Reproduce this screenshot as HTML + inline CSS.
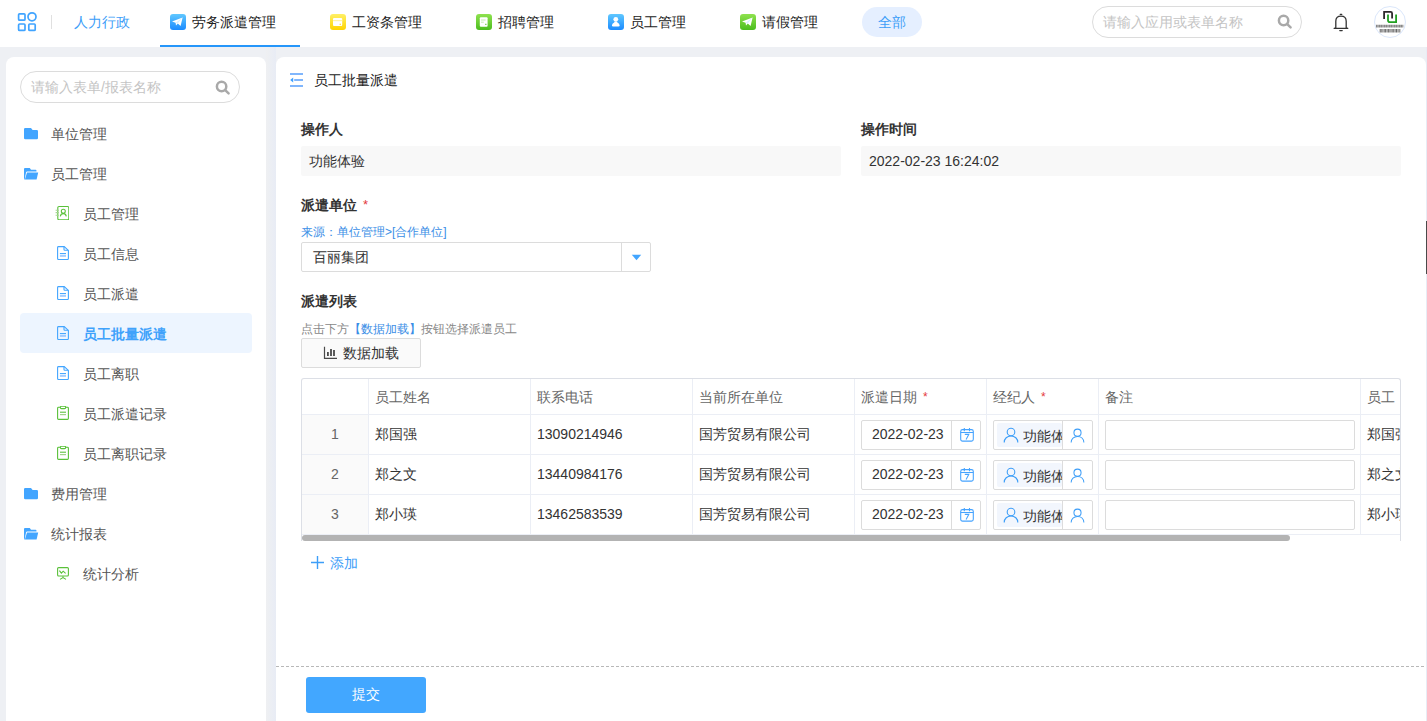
<!DOCTYPE html>
<html><head><meta charset="utf-8">
<style>
*{box-sizing:border-box;margin:0;padding:0}
html,body{width:1427px;height:721px;overflow:hidden}
body{font-family:"Liberation Sans",sans-serif;font-size:14px;color:#333;background:#eef0f4;position:relative}
.a{position:absolute}
.t{position:absolute;white-space:nowrap;line-height:20px}
svg{display:block}
#hdr{position:absolute;left:0;top:0;width:1427px;height:47px;background:#fff}
.tabic{position:absolute;top:14px;width:16px;height:16px;border-radius:3px}
#side{position:absolute;left:6px;top:57px;width:260px;height:680px;background:#fff;border-radius:8px}
#main{position:absolute;left:276px;top:57px;width:1150px;height:680px;background:#fff;border-radius:8px}
.m1{color:#555}
.lbl{font-weight:bold;color:#333}
.ro{position:absolute;height:30px;background:#f8f8f8;border-radius:2px}
.tb{position:absolute;left:301px;top:378px;width:1100px;height:163px;border:1px solid #dcdfe6;border-bottom:0;border-radius:3px 3px 0 0;overflow:hidden}
.hl{position:absolute;height:1px;background:#ebeef5}
.vl{position:absolute;width:1px;background:#ebeef5}
.th{color:#666}
.req{color:#e4393c;font-size:12px;margin-left:2px;position:relative;top:-1px}
.inp{position:absolute;border:1px solid #dcdcdc;border-radius:2px;background:#fff}
</style></head><body>

<svg width="0" height="0" style="position:absolute"><defs>
<g id="ical"><g fill="none" stroke="#45a3ff" stroke-width="1.1"><rect x="1.7" y="2.6" width="12.6" height="11.5" rx="1.8"/><path d="M1.7 5.5h12.6M5.3 1v3.2M10.5 1v3.2"/><path d="M5.8 7.4h4l-2.7 5"/></g></g>
<g id="ifold"><path fill="#42a5ff" d="M0 1.2Q0 0 1.2 0H7L8.6 2H12.8Q14 2 14 3.2V10Q14 11.2 12.8 11.2H1.2Q0 11.2 0 10Z"/></g>
<g id="ifoldo"><path fill="#42a5ff" d="M0 1Q0 0 1 0H5.8L7 1.8H11.6Q12.5 1.8 12.5 2.7V3.4H3.2Q2.3 3.4 2.1 4.3L0.6 11.4H0Z"/><path fill="#42a5ff" d="M3 4.4H14.2L12.6 11.6H0.9Z"/></g>
<g id="idoc"><g fill="none" stroke="#42a5ff" stroke-width="1.1"><path d="M1.5 0.6H7.2L11.4 4.4V12.6Q11.4 13.5 10.5 13.5H1.5Q0.6 13.5 0.6 12.6V1.5Q0.6 0.6 1.5 0.6Z"/><path d="M7 0.8V3.5Q7 4.3 7.8 4.3H11.2"/><path d="M2.9 7.6H9"/></g><path d="M2.9 9.3H9V10.6H2.9Z" fill="#7fb8ff"/></g>
<g id="iclip"><g fill="none" stroke="#5ac13a" stroke-width="1.1"><path d="M3.2 1.3H1.5Q0.6 1.3 0.6 2.2V12.6Q0.6 13.4 1.5 13.4H10.5Q11.4 13.4 11.4 12.6V2.2Q11.4 1.3 10.5 1.3H8.8"/><rect x="3.3" y="0.2" width="5.4" height="2.4" rx="1.2"/><path d="M3 6.2H9"/></g><path d="M3 8H9V9.2H3Z" fill="#9fd389"/></g>
<g id="icontact"><g fill="none" stroke="#5ac13a" stroke-width="1.1"><rect x="4.8" y="1.5" width="11" height="13.2" rx="1.2"/><circle cx="10.3" cy="6.3" r="2"/><path d="M7.3 11.4Q7.8 8.6 10.3 8.6T13.3 11.4"/><path d="M2.6 5.2H6M2.6 7.6H6M2.6 10.2H6" stroke="#a6d494"/></g></g>
<g id="ipres"><g fill="none" stroke="#5ac13a" stroke-width="1.1"><rect x="0.6" y="0.6" width="10.8" height="8.4" rx="1"/><path d="M2.4 3.6L4.4 6.2L6.2 4.2L8.6 6.4"/><path d="M6 9.2V10.6M3 12.4L6 10.6L9 12.4"/></g></g>
<g id="iplane"><path fill="#fff" d="M2 7.6L12.6 3.6L10.6 12L7.8 9.4L6 11.4L5.6 8.8Z"/><path fill="#d8efff" d="M5.6 8.8L12.6 3.6L7.8 9.4Z"/></g>
<g id="iperson"><g fill="none" stroke="#3d9ef8" stroke-width="1.1"><circle cx="8" cy="5" r="3.8"/><path d="M1.2 15.5c0-4 3-6.5 6.8-6.5s6.8 2.5 6.8 6.5"/></g></g>
</defs></svg>
<!-- HEADER -->
<div id="hdr">
  <svg class="a" style="left:12px;top:8px" width="30" height="30" viewBox="0 0 30 30"><g fill="none" stroke="#40a4ff" stroke-width="1.7"><rect x="6.6" y="5.8" width="6.4" height="6.4" rx="1"/><circle cx="20" cy="8.8" r="4"/><rect x="6.6" y="16" width="6.4" height="6.4" rx="1"/><rect x="16.8" y="16" width="6.4" height="6.4" rx="1"/></g></svg>
  <div class="a" style="left:51px;top:15px;width:1px;height:14px;background:#e0e0e0"></div>
  <div class="t" style="left:74px;top:12px;color:#3d9ef8">人力行政</div>

  <div class="tabic" style="left:170px;background:linear-gradient(#60c8ff,#1b8bff)"><svg width="16" height="16" viewBox="0 0 16 16"><use href="#iplane"/></svg></div>
  <div class="t" style="left:192px;top:12px;color:#222">劳务派遣管理</div>
  <div class="a" style="left:160px;top:45px;width:140px;height:2px;background:#2596fa"></div>

  <div class="tabic" style="left:330px;background:linear-gradient(#fff066,#ffd400)"><svg width="16" height="16" viewBox="0 0 16 16"><rect x="3" y="4" width="9.2" height="8" rx="1" fill="#fff"/><rect x="3" y="6" width="9.2" height="1.2" fill="#fff3a6"/><circle cx="10.3" cy="10.4" r="0.8" fill="#ffe14d"/></svg></div>
  <div class="t" style="left:352px;top:12px;color:#222">工资条管理</div>

  <div class="tabic" style="left:476px;background:linear-gradient(#8fe24f,#4bbd1d)"><svg width="16" height="16" viewBox="0 0 16 16"><rect x="3.8" y="3.2" width="7.8" height="9.6" rx="1" fill="#fff"/><path d="M5 6H9.6M5 8.2H7.8" stroke="#c4ecb0" stroke-width="1"/><path d="M9 10.4H10.6" stroke="#8bd36a" stroke-width="1.2"/></svg></div>
  <div class="t" style="left:498px;top:12px;color:#222">招聘管理</div>

  <div class="tabic" style="left:608px;background:linear-gradient(#60c8ff,#1b8bff)"><svg width="16" height="16" viewBox="0 0 16 16"><circle cx="7.8" cy="5.3" r="2.4" fill="#fff"/><path d="M6.6 7.4H9L9.4 8.4Q11.6 9.4 11.7 11.4Q11.7 12.4 10.4 12.4H5.2Q3.9 12.4 3.9 11.4Q4 9.4 6.2 8.4Z" fill="#fff"/></svg></div>
  <div class="t" style="left:630px;top:12px;color:#222">员工管理</div>

  <div class="tabic" style="left:740px;background:linear-gradient(#8fe24f,#4bbd1d)"><svg width="16" height="16" viewBox="0 0 16 16"><use href="#iplane"/></svg></div>
  <div class="t" style="left:762px;top:12px;color:#222">请假管理</div>

  <div class="a" style="left:862px;top:7px;width:60px;height:30px;border-radius:15px;background:#e5efff"></div>
  <div class="t" style="left:878px;top:12px;color:#3d9ef8">全部</div>

  <div class="a" style="left:1092px;top:6px;width:210px;height:32px;border:1px solid #dcdcdc;border-radius:16px"></div>
  <div class="t" style="left:1103px;top:12px;color:#c4c4c4">请输入应用或表单名称</div>

  <div class="a" style="left:1374px;top:6px;width:32px;height:32px;border:1px solid #dbe7fb;border-radius:50%"></div>
<svg class="a" style="left:1276px;top:13px" width="17" height="17" viewBox="0 0 17 17"><g fill="none" stroke="#a9a9a9" stroke-width="2.5"><circle cx="7.6" cy="7.5" r="4.7"/><path d="M11.2 11.1L14.6 14.3" stroke-linecap="round"/></g></svg>
  <svg class="a" style="left:1332px;top:12px" width="18" height="21" viewBox="0 0 18 21"><g fill="none" stroke="#333" stroke-width="1.3"><path d="M3.8 16V9.2Q3.8 4.1 9 4.1T14.2 9.2V16L15.8 16.4H2.2Z" stroke-linejoin="round"/><path d="M8.2 2.3H9.8M7.8 18.6H10.2" stroke-linecap="round"/></g></svg>
  <svg class="a" style="left:1375px;top:10px" width="30" height="24" viewBox="0 0 30 24"><path d="M9.1 9V1.9H15.6Q17.1 1.9 17.1 3.4V8.6" fill="none" stroke="#2f2a2c" stroke-width="1.8"/><path d="M13 4.5V10.2Q13 12.1 14.9 12.1H21.1V4.5" fill="none" stroke="#22a022" stroke-width="1.8"/><path d="M1.2 16.1H28.5" stroke="#6a6a6a" stroke-width="2.8" stroke-dasharray="1.1 0.4 0.6 0.4"/><path d="M4.7 20.8H25.5" stroke="#6a6a6a" stroke-width="3.4" stroke-dasharray="1.1 0.5 0.7 0.4"/></svg>
</div>

<!-- SIDEBAR -->
<div class="a" style="left:266px;top:47px;width:10px;height:674px;background:linear-gradient(90deg,#eff0f2,#e8ecf5)"></div>
<div class="a" style="left:1426px;top:47px;width:1px;height:674px;background:#e8ecf5"></div>
<div id="side"></div>
<div class="a" style="left:20px;top:71px;width:220px;height:32px;border:1px solid #dcdcdc;border-radius:16px"></div>
<div class="t" style="left:31px;top:77px;color:#c4c4c4">请输入表单/报表名称</div>

<div class="a" style="left:20px;top:313px;width:232px;height:40px;border-radius:4px;background:#edf5ff"></div>
<div class="t m1" style="left:51px;top:124px">单位管理</div>
<div class="t m1" style="left:51px;top:164px">员工管理</div>
<div class="t m1" style="left:83px;top:204px">员工管理</div>
<div class="t m1" style="left:83px;top:244px">员工信息</div>
<div class="t m1" style="left:83px;top:284px">员工派遣</div>
<div class="t" style="left:83px;top:324px;color:#3fa2fb;font-weight:bold">员工批量派遣</div>
<div class="t m1" style="left:83px;top:364px">员工离职</div>
<div class="t m1" style="left:83px;top:404px">员工派遣记录</div>
<div class="t m1" style="left:83px;top:444px">员工离职记录</div>
<div class="t m1" style="left:51px;top:484px">费用管理</div>
<div class="t m1" style="left:51px;top:524px">统计报表</div>
<div class="t m1" style="left:83px;top:564px">统计分析</div>


<svg class="a" style="left:214px;top:79px" width="17" height="17" viewBox="0 0 17 17"><g fill="none" stroke="#a9a9a9" stroke-width="2.5"><circle cx="7.6" cy="7.5" r="4.7"/><path d="M11.2 11.1L14.6 14.3" stroke-linecap="round"/></g></svg>
<svg class="a" style="left:24px;top:128px" width="14" height="12" viewBox="0 0 14 12"><use href="#ifold"/></svg>
<svg class="a" style="left:24px;top:168px" width="15" height="12" viewBox="0 0 15 12"><use href="#ifoldo"/></svg>
<svg class="a" style="left:53px;top:205px" width="16" height="15" viewBox="0 0 16 15"><use href="#icontact"/></svg>
<svg class="a" style="left:57px;top:246px" width="12" height="14" viewBox="0 0 12 14"><use href="#idoc"/></svg>
<svg class="a" style="left:57px;top:286px" width="12" height="14" viewBox="0 0 12 14"><use href="#idoc"/></svg>
<svg class="a" style="left:57px;top:326px" width="12" height="14" viewBox="0 0 12 14"><use href="#idoc"/></svg>
<svg class="a" style="left:57px;top:366px" width="12" height="14" viewBox="0 0 12 14"><use href="#idoc"/></svg>
<svg class="a" style="left:57px;top:406px" width="12" height="14" viewBox="0 0 12 14"><use href="#iclip"/></svg>
<svg class="a" style="left:57px;top:446px" width="12" height="14" viewBox="0 0 12 14"><use href="#iclip"/></svg>
<svg class="a" style="left:24px;top:488px" width="14" height="12" viewBox="0 0 14 12"><use href="#ifold"/></svg>
<svg class="a" style="left:24px;top:528px" width="15" height="12" viewBox="0 0 15 12"><use href="#ifoldo"/></svg>
<svg class="a" style="left:57px;top:567px" width="12" height="13" viewBox="0 0 12 13"><use href="#ipres"/></svg>

<!-- MAIN -->
<div id="main"></div>
<div class="t" style="left:314px;top:70px;color:#222">员工批量派遣</div>

<div class="t lbl" style="left:301px;top:119px">操作人</div>
<div class="ro" style="left:301px;top:146px;width:540px"></div>
<div class="t" style="left:309px;top:151px">功能体验</div>
<div class="t lbl" style="left:861px;top:119px">操作时间</div>
<div class="ro" style="left:861px;top:146px;width:540px"></div>
<div class="t" style="left:869px;top:151px">2022-02-23 16:24:02</div>

<div class="t lbl" style="left:301px;top:195px">派遣单位 <span class="req" style="font-weight:normal;font-size:13px">*</span></div>
<div class="t" style="left:301px;top:222px;font-size:12px;color:#3a8ee6">来源：单位管理&gt;[合作单位]</div>
<div class="inp" style="left:301px;top:242px;width:350px;height:30px"></div>
<div class="a" style="left:621px;top:243px;width:1px;height:28px;background:#dcdcdc"></div>
<div class="t" style="left:313px;top:247px">百丽集团</div>

<div class="t lbl" style="left:301px;top:291px">派遣列表</div>
<div class="t" style="left:301px;top:319px;font-size:12px;color:#888">点击下方<span style="color:#3a8ee6">【数据加载】</span>按钮选择派遣员工</div>
<div class="a" style="left:301px;top:338px;width:120px;height:30px;border:1px solid #dcdcdc;border-radius:2px;background:#fafafa"></div>
<div class="t" style="left:343px;top:343px">数据加载</div>

<div class="tb"><div class="a" style="left:-302px;top:-379px;width:1427px;height:721px">
<div class="a" style="left:302px;top:415px;width:66px;height:119px;background:#fafafa"></div>
<div class="hl" style="left:302px;top:414px;width:1100px"></div>
<div class="hl" style="left:302px;top:454px;width:1100px"></div>
<div class="hl" style="left:302px;top:494px;width:1100px"></div>
<div class="hl" style="left:302px;top:534px;width:1100px"></div>
<div class="vl" style="left:368px;top:379px;height:155px"></div>
<div class="vl" style="left:530px;top:379px;height:155px"></div>
<div class="vl" style="left:692px;top:379px;height:155px"></div>
<div class="vl" style="left:854px;top:379px;height:155px"></div>
<div class="vl" style="left:986px;top:379px;height:155px"></div>
<div class="vl" style="left:1098px;top:379px;height:155px"></div>
<div class="vl" style="left:1360px;top:379px;height:155px"></div>
<div class="t th" style="left:375px;top:387px">员工姓名</div>
<div class="t th" style="left:537px;top:387px">联系电话</div>
<div class="t th" style="left:699px;top:387px">当前所在单位</div>
<div class="t th" style="left:861px;top:387px">派遣日期 <span class="req">*</span></div>
<div class="t th" style="left:993px;top:387px">经纪人 <span class="req">*</span></div>
<div class="t th" style="left:1105px;top:387px">备注</div>
<div class="t th" style="left:1367px;top:387px">员工</div>
<div class="t th" style="left:331px;top:424px;width:8px;text-align:center">1</div>
<div class="t" style="left:375px;top:424px">郑国强</div>
<div class="t" style="left:537px;top:424px">13090214946</div>
<div class="t" style="left:699px;top:424px">国芳贸易有限公司</div>
<div class="inp" style="left:861px;top:420px;width:120px;height:30px"></div>
<div class="vl" style="left:951px;top:421px;height:28px;background:#dcdcdc"></div>
<div class="t" style="left:872px;top:424px">2022-02-23</div>
<svg class="a cal" style="left:959px;top:427px" width="16" height="15" viewBox="0 0 16 15"><use href="#ical"/></svg>
<div class="inp" style="left:993px;top:420px;width:100px;height:30px"></div>
<div class="a" style="left:997px;top:423px;width:65px;height:24px;background:#f2f6fd;border-radius:2px"></div>
<div class="vl" style="left:1062px;top:421px;height:28px;background:#dcdcdc"></div>
<svg class="a" style="left:1003px;top:427px" width="16" height="16" viewBox="0 0 16 16"><use href="#iperson"/></svg>
<div class="a" style="left:1023px;top:421px;width:39px;height:28px;overflow:hidden"><div class="t" style="left:0;top:5px">功能体验</div></div>
<svg class="a" style="left:1070px;top:428px" width="15" height="15" viewBox="0 0 16 16"><use href="#iperson"/></svg>
<div class="inp" style="left:1105px;top:420px;width:250px;height:30px"></div>
<div class="t" style="left:1367px;top:424px">郑国强</div>
<div class="t th" style="left:331px;top:464px;width:8px;text-align:center">2</div>
<div class="t" style="left:375px;top:464px">郑之文</div>
<div class="t" style="left:537px;top:464px">13440984176</div>
<div class="t" style="left:699px;top:464px">国芳贸易有限公司</div>
<div class="inp" style="left:861px;top:460px;width:120px;height:30px"></div>
<div class="vl" style="left:951px;top:461px;height:28px;background:#dcdcdc"></div>
<div class="t" style="left:872px;top:464px">2022-02-23</div>
<svg class="a cal" style="left:959px;top:467px" width="16" height="15" viewBox="0 0 16 15"><use href="#ical"/></svg>
<div class="inp" style="left:993px;top:460px;width:100px;height:30px"></div>
<div class="a" style="left:997px;top:463px;width:65px;height:24px;background:#f2f6fd;border-radius:2px"></div>
<div class="vl" style="left:1062px;top:461px;height:28px;background:#dcdcdc"></div>
<svg class="a" style="left:1003px;top:467px" width="16" height="16" viewBox="0 0 16 16"><use href="#iperson"/></svg>
<div class="a" style="left:1023px;top:461px;width:39px;height:28px;overflow:hidden"><div class="t" style="left:0;top:5px">功能体验</div></div>
<svg class="a" style="left:1070px;top:468px" width="15" height="15" viewBox="0 0 16 16"><use href="#iperson"/></svg>
<div class="inp" style="left:1105px;top:460px;width:250px;height:30px"></div>
<div class="t" style="left:1367px;top:464px">郑之文</div>
<div class="t th" style="left:331px;top:504px;width:8px;text-align:center">3</div>
<div class="t" style="left:375px;top:504px">郑小瑛</div>
<div class="t" style="left:537px;top:504px">13462583539</div>
<div class="t" style="left:699px;top:504px">国芳贸易有限公司</div>
<div class="inp" style="left:861px;top:500px;width:120px;height:30px"></div>
<div class="vl" style="left:951px;top:501px;height:28px;background:#dcdcdc"></div>
<div class="t" style="left:872px;top:504px">2022-02-23</div>
<svg class="a cal" style="left:959px;top:507px" width="16" height="15" viewBox="0 0 16 15"><use href="#ical"/></svg>
<div class="inp" style="left:993px;top:500px;width:100px;height:30px"></div>
<div class="a" style="left:997px;top:503px;width:65px;height:24px;background:#f2f6fd;border-radius:2px"></div>
<div class="vl" style="left:1062px;top:501px;height:28px;background:#dcdcdc"></div>
<svg class="a" style="left:1003px;top:507px" width="16" height="16" viewBox="0 0 16 16"><use href="#iperson"/></svg>
<div class="a" style="left:1023px;top:501px;width:39px;height:28px;overflow:hidden"><div class="t" style="left:0;top:5px">功能体验</div></div>
<svg class="a" style="left:1070px;top:508px" width="15" height="15" viewBox="0 0 16 16"><use href="#iperson"/></svg>
<div class="inp" style="left:1105px;top:500px;width:250px;height:30px"></div>
<div class="t" style="left:1367px;top:504px">郑小瑛</div>
<div class="a" style="left:302px;top:535px;width:988px;height:6px;border-radius:3px;background:#b3b3b3"></div>
</div></div>
<div class="t" style="left:330px;top:553px;color:#3d9ef8">添加</div>

<div class="a" style="left:276px;top:666px;width:1150px;height:1px;background:repeating-linear-gradient(90deg,#b8b8b8 0 3px,transparent 3px 5px)"></div>
<div class="a" style="left:306px;top:677px;width:120px;height:36px;border-radius:3px;background:#42a7ff"></div>
<div class="t" style="left:352px;top:684px;color:#fff">提交</div>


<svg class="a" style="left:290px;top:73px" width="14" height="14" viewBox="0 0 14 14"><g fill="#80b6fc"><rect x="0" y="0" width="13" height="2"/><rect x="4.2" y="6" width="8.8" height="2"/><rect x="0" y="12" width="13" height="2"/></g><path d="M0.2 7L3.2 4.6V9.6Z" fill="#3fa0ff"/></svg>
<svg class="a" style="left:631px;top:254px" width="11" height="7" viewBox="0 0 11 7"><path d="M0.8 0.8H10.2L5.5 6.2Z" fill="#42a5ff"/></svg>
<svg class="a" style="left:323px;top:346px" width="15" height="14" viewBox="0 0 15 14"><g fill="none" stroke="#4a4a4a"><path d="M1.5 0.7V12.4H14" stroke-width="1.2"/><path d="M4.9 6V10M8 3V10M11 4V10" stroke-width="1.8"/></g></svg>
<svg class="a" style="left:310px;top:555px" width="15" height="15" viewBox="0 0 15 15"><path d="M7.5 1V14M1 7.5H14" stroke="#3d9ef8" stroke-width="1.4"/></svg>
<div class="a" style="left:1426px;top:221px;width:1px;height:53px;background:#4a4a4a"></div>

</body></html>
